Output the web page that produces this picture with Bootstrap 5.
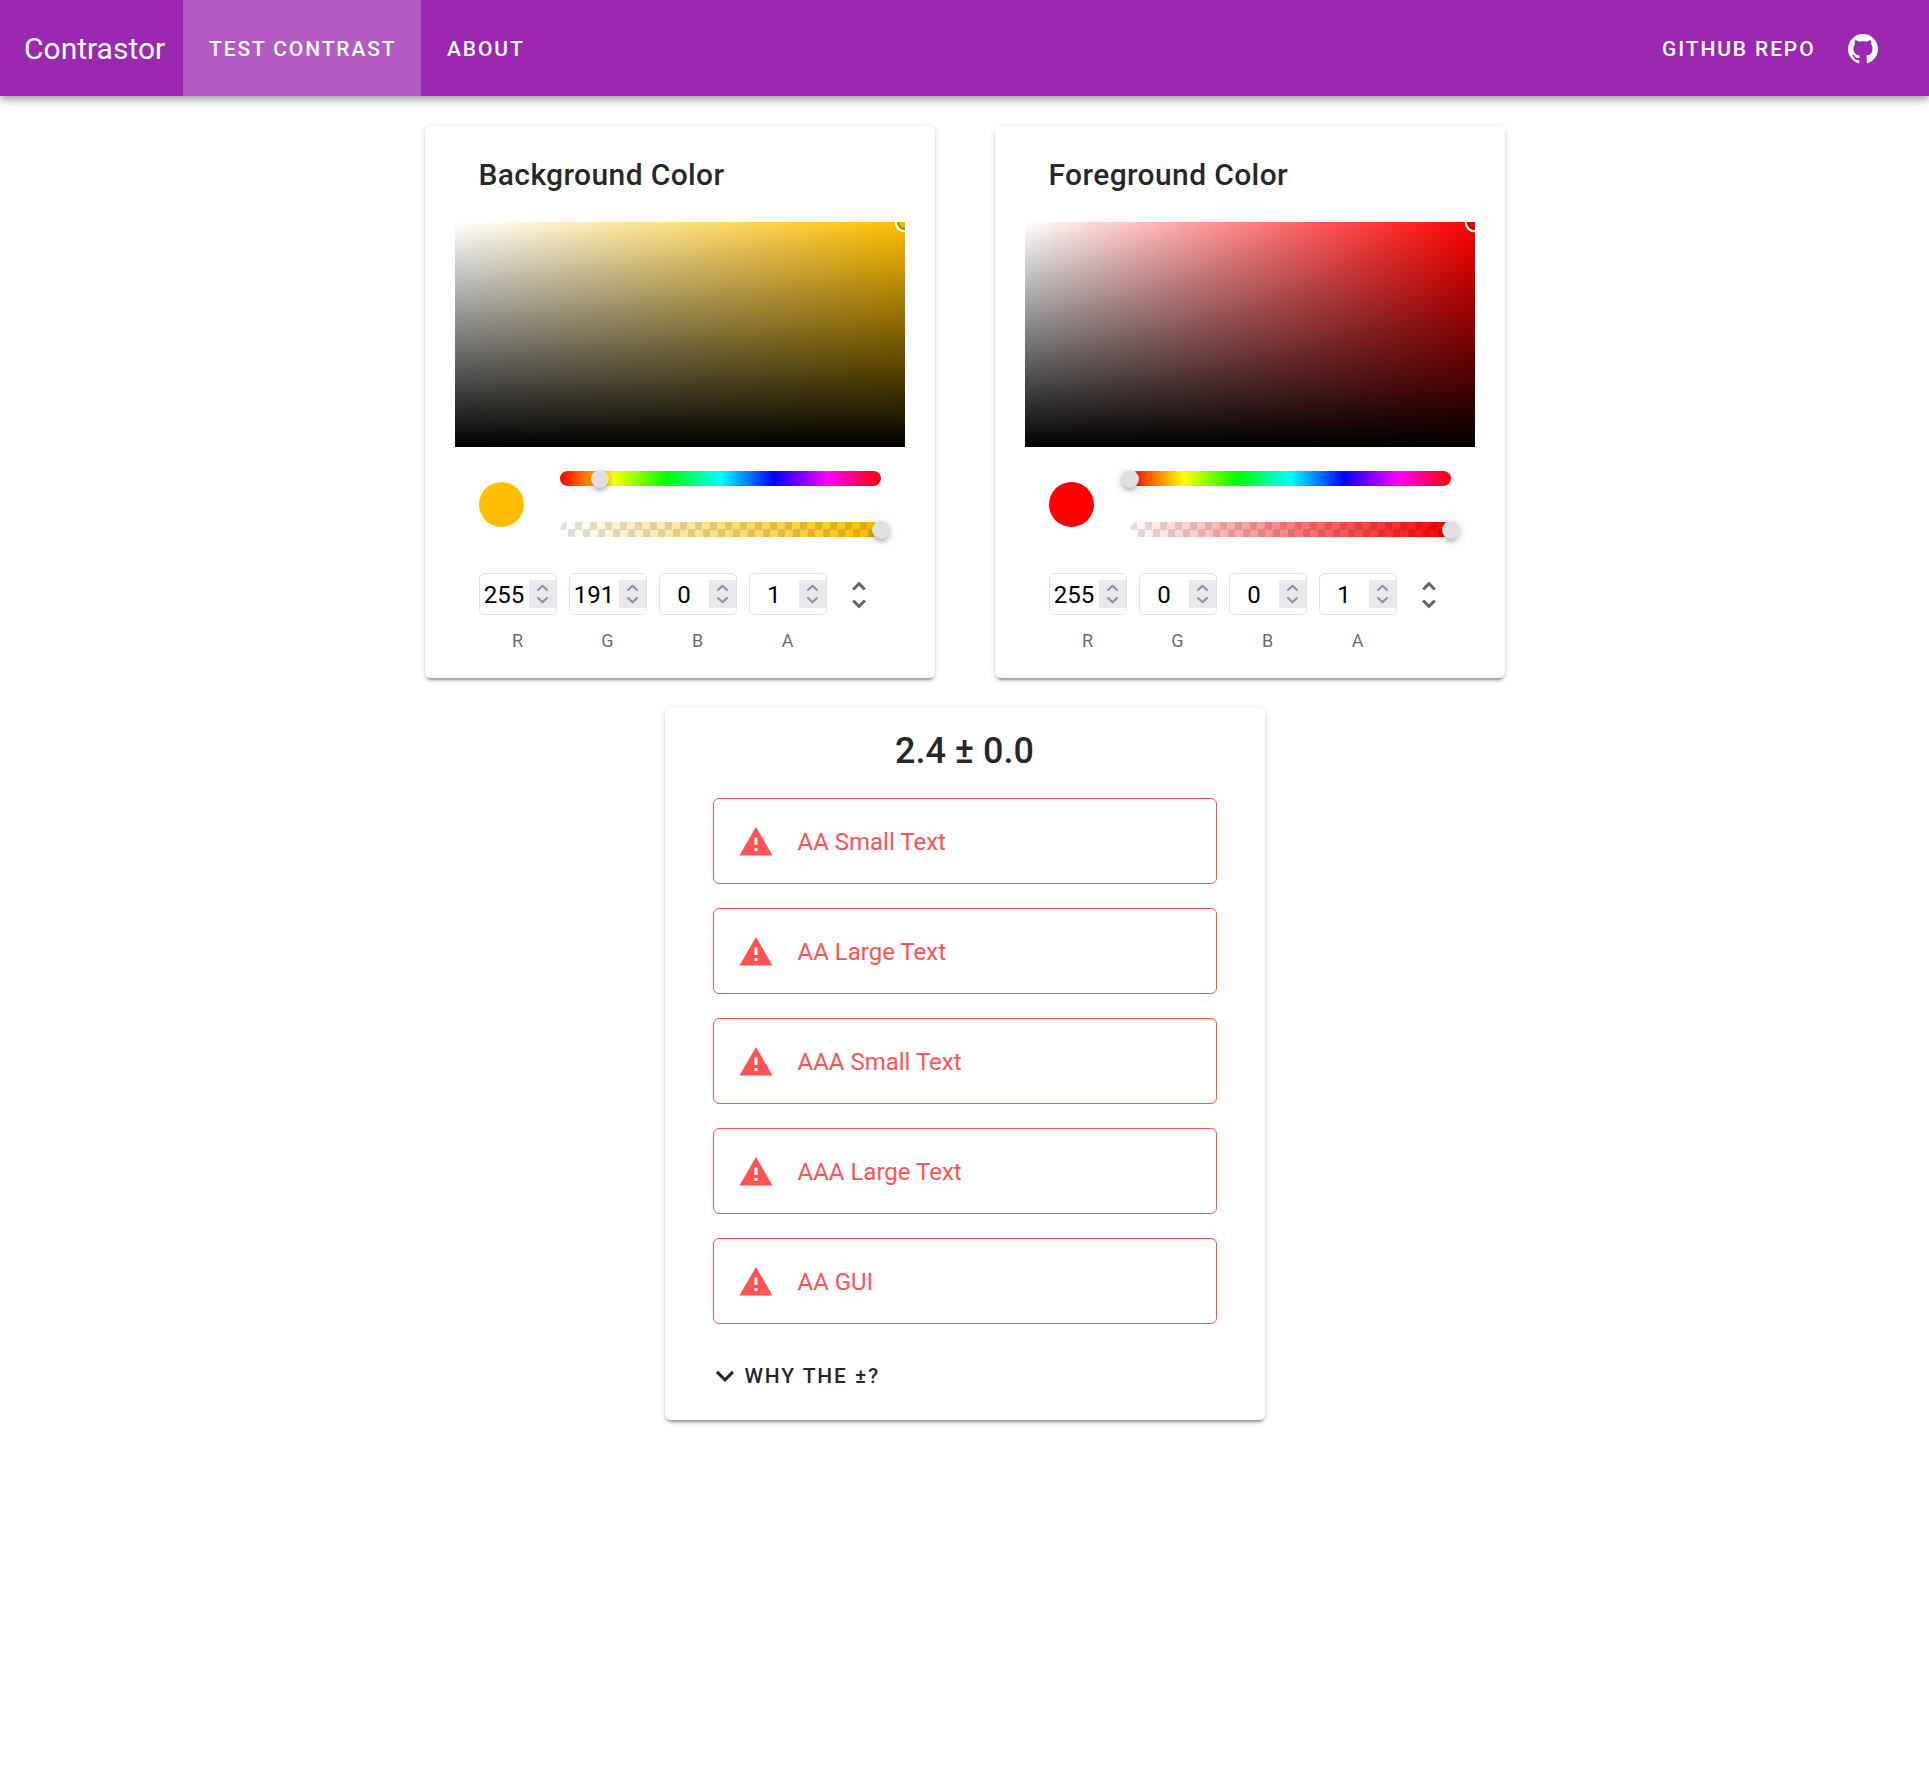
<!DOCTYPE html>
<html lang="en">
<head>
<meta charset="utf-8">
<meta name="viewport" content="width=device-width, initial-scale=1">
<title>Contrastor</title>
<link href="https://cdn.jsdelivr.net/npm/bootstrap@5.3.0/dist/css/bootstrap.min.css" rel="stylesheet">
<style>
  body { font-family: Roboto, sans-serif; font-size: 24px; line-height: 1.5; color: rgba(0,0,0,.87); background: #fff; }
  main { padding-bottom: 48px; }
  .app-bar { height: 96px; padding: 0 24px; background: #9c27b0; color: #fff; box-shadow: 0 3px 6px -1.5px rgba(0,0,0,.2), 0 6px 7.5px 0 rgba(0,0,0,.14), 0 1.5px 15px 0 rgba(0,0,0,.12); }
  .app-title { font-size: 30px; width: 159px; white-space: nowrap; line-height: 1.5; }
  .app-btn { font-size: 21px; font-weight: 500; letter-spacing: .0892857em; text-transform: uppercase; border-radius: 0; border: 0; white-space: nowrap; color: #fff; padding: 0 25px 0 26px; }
  .app-btn span { padding-top: 3px; }
  .app-btn.current { background: rgba(255,255,255,.24); width: 238px; }
  .mdi { width: 36px; height: 36px; fill: currentColor; flex: none; display: block; }
  .repo-icon { margin: 1px -1px 0 29.5px; }
  .sheet { border: 0; border-radius: 6px; color: inherit; background: #fff; box-shadow: 0 4.5px 1.5px -3px rgba(0,0,0,.2), 0 3px 3px 0 rgba(0,0,0,.14), 0 1.5px 7.5px 0 rgba(0,0,0,.12); }
  .pickers { gap: 60px; padding-top: 30px; }
  .picker { width: 510px; height: 552px; padding: 0 30px; }
  .picker-title { height: 96px; padding: 25px 24px 23px; font-size: 30px; font-weight: 500; letter-spacing: .0125em; line-height: 48px; margin: 0; }
  .shade { height: 225px; border-radius: 6px 0 0 0; overflow: hidden; background: linear-gradient(to top, #000, rgba(0,0,0,0)), linear-gradient(to right, #fff, var(--hue)); }
  .shade-knob { width: 15px; height: 15px; top: -7.5px; right: -7.5px; border-radius: 50%; box-shadow: 0 0 0 2.25px #fff, inset 0 0 1.5px 2.25px rgba(0,0,0,.3); }
  .controls { padding: 24px 24px 0; }
  .swatch { width: 45px; height: 45px; border-radius: 50%; background: var(--hue); margin-top: 11px; }
  .tracks { width: 321px; gap: 36px; }
  .track { height: 15px; border-radius: 7.5px; }
  .track-hue { background: linear-gradient(to right, #f00 0%, #ff0 16.66%, #0f0 33.33%, #0ff 50%, #00f 66.66%, #f0f 83.33%, #f00 100%); }
  .track-alpha { background: repeating-conic-gradient(transparent 0 25%, rgba(0,0,0,.12) 0 50%) 0 0 / 15px 15px, linear-gradient(to right, transparent, var(--hue)); }
  .thumb { width: 18px; height: 18px; top: -1px; margin-left: -9px; border-radius: 50%; background: #e0e0e0; box-shadow: 0 4.5px 4.5px -3px rgba(0,0,0,.2), 0 3px 6px 0 rgba(0,0,0,.14), 0 1.5px 12px 0 rgba(0,0,0,.12); }
  .fields { margin-top: 36px; gap: 12px; }
  .field { width: 78px; }
  .field-box { height: 42px; border: 1px solid #e0e0e0; border-radius: 6px; color: #000; padding: 0; overflow: hidden; }
  .field-value { line-height: 38px; padding-top: 2px; }
  .stepper { width: 27px; height: 28px; background: #e8e8ed; }
  .stepper svg { display: block; width: 27px; height: 28px; fill: none; stroke: #8f8f9d; stroke-width: 2; stroke-linecap: round; stroke-linejoin: round; }
  .field-label { font-size: 18px; line-height: 24px; margin-top: 14px; color: rgba(0,0,0,.6); }
  .mode { color: rgba(0,0,0,.6); margin: 4px 0 0 2.5px; }
  .result { width: 600px; height: 712px; margin-top: 30px; padding: 0 48px; }
  .ratio { font-size: 36px; font-weight: 500; line-height: 48px; margin: 19px 0 23px; }
  .verdicts { gap: 24px; }
  .verdict { height: 86px; margin: 0; padding: 2px 24px 0; border: 1px solid #ff5252; border-radius: 6px; color: #ff5252; background: transparent; gap: 24px; }
  .why { font-size: 21px; font-weight: 500; letter-spacing: .0892857em; line-height: 36px; margin: 34px 0 0 -6px; padding: 0; border: 0; color: rgba(0,0,0,.87); gap: 2px; }
</style>
</head>
<body>
<svg class="d-none" xmlns="http://www.w3.org/2000/svg">
  <symbol id="github" viewBox="0 0 24 24"><path d="M12,2A10,10 0 0,0 2,12C2,16.42 4.87,20.17 8.84,21.5C9.34,21.58 9.5,21.27 9.5,21C9.5,20.77 9.5,20.14 9.5,19.31C6.73,19.91 6.14,17.97 6.14,17.97C5.68,16.81 5.03,16.5 5.03,16.5C4.12,15.88 5.1,15.9 5.1,15.9C6.1,15.97 6.63,16.93 6.63,16.93C7.5,18.45 8.97,18 9.54,17.76C9.63,17.11 9.89,16.67 10.17,16.42C7.95,16.17 5.62,15.31 5.62,11.5C5.62,10.39 6,9.5 6.65,8.79C6.55,8.54 6.2,7.5 6.75,6.15C6.75,6.15 7.59,5.88 9.5,7.17C10.29,6.95 11.15,6.84 12,6.84C12.85,6.84 13.71,6.95 14.5,7.17C16.41,5.88 17.25,6.15 17.25,6.15C17.8,7.5 17.45,8.54 17.35,8.79C18,9.5 18.38,10.39 18.38,11.5C18.38,15.32 16.04,16.16 13.81,16.41C14.17,16.72 14.5,17.33 14.5,18.26C14.5,19.6 14.5,20.68 14.5,21C14.5,21.27 14.66,21.59 15.17,21.5C19.14,20.16 22,16.42 22,12A10,10 0 0,0 12,2Z"/></symbol>
  <symbol id="alert" viewBox="0 0 24 24"><path d="M13 14H11V9H13M13 18H11V16H13M1 21H23L12 2L1 21Z"/></symbol>
  <symbol id="chevron" viewBox="0 0 24 24"><path d="M7.41,8.58L12,13.17L16.59,8.58L18,10L12,16L6,10L7.41,8.58Z"/></symbol>
  <symbol id="unfold" viewBox="0 0 24 24"><path d="M12,18.17L8.83,15L7.42,16.41L12,21L16.59,16.41L15.17,15M12,5.83L15.17,9L16.58,7.59L12,3L7.41,7.59L8.83,9L12,5.83Z"/></symbol>
  <symbol id="steps" viewBox="0 0 27 28"><path d="M9 10L13.5 5.7L18 10M9 18L13.5 22.3L18 18"/></symbol>
</svg>

<header class="app-bar d-flex align-items-center position-relative">
  <div class="app-title">Contrastor</div>
  <a href="#" class="app-btn current btn h-100 d-flex align-items-center"><span>Test Contrast</span></a>
  <a href="#" class="app-btn btn h-100 d-flex align-items-center"><span>About</span></a>
  <a href="#" class="app-btn btn h-100 d-flex align-items-center ms-auto"><span>Github Repo</span><svg class="mdi repo-icon"><use href="#github"/></svg></a>
</header>

<main>
  <div class="pickers d-flex justify-content-center">
    <section class="picker card sheet" style="--hue:#ffbf00">
      <h2 class="picker-title">Background Color</h2>
      <div class="shade position-relative"><div class="shade-knob position-absolute"></div></div>
      <div class="controls">
        <div class="d-flex justify-content-between">
          <div class="swatch"></div>
          <div class="tracks d-flex flex-column">
            <div class="track track-hue position-relative"><div class="thumb position-absolute" style="left:12.5%"></div></div>
            <div class="track track-alpha position-relative"><div class="thumb position-absolute" style="left:100%"></div></div>
          </div>
        </div>
        <div class="fields d-flex">
          <div class="field"><div class="field-box d-flex align-items-center"><span class="field-value flex-fill text-center">255</span><span class="stepper"><svg><use href="#steps"/></svg></span></div><div class="field-label text-center">R</div></div>
          <div class="field"><div class="field-box d-flex align-items-center"><span class="field-value flex-fill text-center">191</span><span class="stepper"><svg><use href="#steps"/></svg></span></div><div class="field-label text-center">G</div></div>
          <div class="field"><div class="field-box d-flex align-items-center"><span class="field-value flex-fill text-center">0</span><span class="stepper"><svg><use href="#steps"/></svg></span></div><div class="field-label text-center">B</div></div>
          <div class="field"><div class="field-box d-flex align-items-center"><span class="field-value flex-fill text-center">1</span><span class="stepper"><svg><use href="#steps"/></svg></span></div><div class="field-label text-center">A</div></div>
          <svg class="mdi mode"><use href="#unfold"/></svg>
        </div>
      </div>
    </section>

    <section class="picker card sheet" style="--hue:#ff0000">
      <h2 class="picker-title">Foreground Color</h2>
      <div class="shade position-relative"><div class="shade-knob position-absolute"></div></div>
      <div class="controls">
        <div class="d-flex justify-content-between">
          <div class="swatch"></div>
          <div class="tracks d-flex flex-column">
            <div class="track track-hue position-relative"><div class="thumb position-absolute" style="left:0%"></div></div>
            <div class="track track-alpha position-relative"><div class="thumb position-absolute" style="left:100%"></div></div>
          </div>
        </div>
        <div class="fields d-flex">
          <div class="field"><div class="field-box d-flex align-items-center"><span class="field-value flex-fill text-center">255</span><span class="stepper"><svg><use href="#steps"/></svg></span></div><div class="field-label text-center">R</div></div>
          <div class="field"><div class="field-box d-flex align-items-center"><span class="field-value flex-fill text-center">0</span><span class="stepper"><svg><use href="#steps"/></svg></span></div><div class="field-label text-center">G</div></div>
          <div class="field"><div class="field-box d-flex align-items-center"><span class="field-value flex-fill text-center">0</span><span class="stepper"><svg><use href="#steps"/></svg></span></div><div class="field-label text-center">B</div></div>
          <div class="field"><div class="field-box d-flex align-items-center"><span class="field-value flex-fill text-center">1</span><span class="stepper"><svg><use href="#steps"/></svg></span></div><div class="field-label text-center">A</div></div>
          <svg class="mdi mode"><use href="#unfold"/></svg>
        </div>
      </div>
    </section>
  </div>

  <section class="result card sheet mx-auto">
    <h1 class="ratio text-center">2.4 ± 0.0</h1>
    <div class="verdicts d-flex flex-column">
      <div class="verdict alert d-flex align-items-center"><svg class="mdi"><use href="#alert"/></svg><span>AA Small Text</span></div>
      <div class="verdict alert d-flex align-items-center"><svg class="mdi"><use href="#alert"/></svg><span>AA Large Text</span></div>
      <div class="verdict alert d-flex align-items-center"><svg class="mdi"><use href="#alert"/></svg><span>AAA Small Text</span></div>
      <div class="verdict alert d-flex align-items-center"><svg class="mdi"><use href="#alert"/></svg><span>AAA Large Text</span></div>
      <div class="verdict alert d-flex align-items-center"><svg class="mdi"><use href="#alert"/></svg><span>AA GUI</span></div>
    </div>
    <button class="why btn d-flex align-items-center align-self-start" type="button"><svg class="mdi"><use href="#chevron"/></svg><span>WHY THE ±?</span></button>
  </section>
</main>
<script src="https://cdn.jsdelivr.net/npm/bootstrap@5.3.0/dist/js/bootstrap.bundle.min.js"></script>
</body>
</html>
